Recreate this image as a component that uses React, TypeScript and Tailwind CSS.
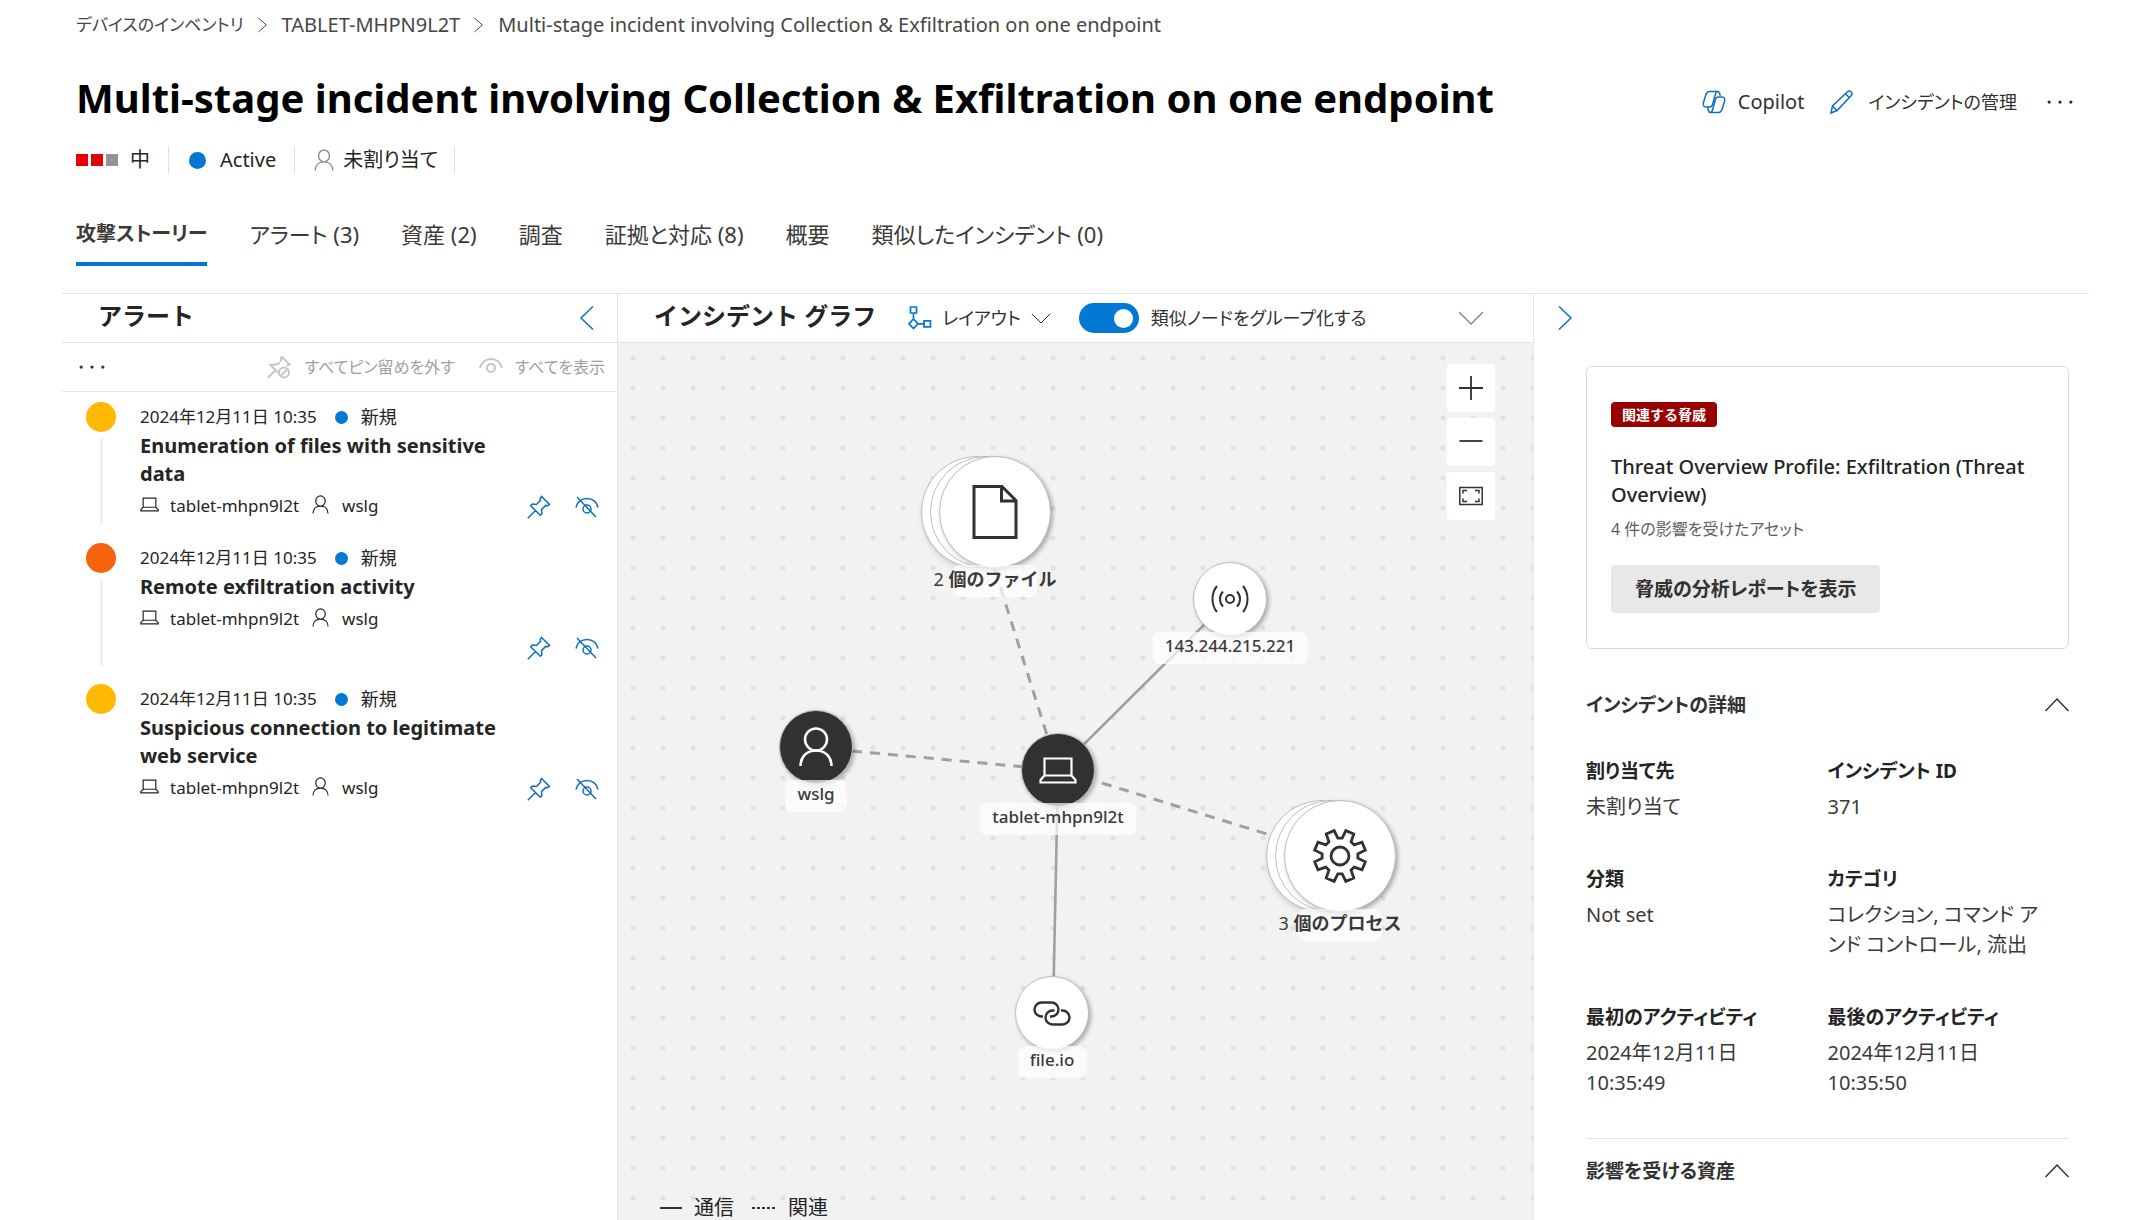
import React, { useState } from 'react';
import { clsx } from 'clsx';

const TABS = ['攻撃ストーリー', 'アラート (3)', '資産 (2)', '調査', '証拠と対応 (8)', '概要', '類似したインシデント (0)'];

const ALERTS = [
  { title: 'Enumeration of files with sensitive data', color: 'bg-[#ffb900]' },
  { title: 'Remote exfiltration activity', color: 'bg-[#f7630c]' },
  { title: 'Suspicious connection to legitimate web service', color: 'bg-[#ffb900]' },
];

const DETAILS = [
  { label: '割り当て先', value: '未割り当て' },
  { label: 'インシデント ID', value: '371' },
  { label: '分類', value: 'Not set' },
  { label: 'カテゴリ', value: 'コレクション, コマンド アンド コントロール, 流出' },
  { label: '最初のアクティビティ', value: '2024年12月11日 10:35:49' },
  { label: '最後のアクティビティ', value: '2024年12月11日 10:35:50' },
];

function Icon({ d, size = 24, width = 1.5, className, children }: any) {
  return (
    <svg viewBox="0 0 24 24" width={size} height={size} fill="none" stroke="currentColor" strokeWidth={width} className={clsx('shrink-0', className)} aria-hidden="true">
      {d && <path d={d} />}
      {children}
    </svg>
  );
}

const PIN = 'M14.5 1.5l8 8-1.8 1.2-2-.3-4.2 4.2.4 4.2-1.6 1.5L3.7 10.7l1.5-1.6 4.2.4 4.2-4.2-.4-2z M8.5 15.5L.8 23.2';
const PERSON = 'M12 1a6 6.5 0 1 0 0 13 6 6.5 0 1 0 0-13z M2.5 23.5c0-5.5 3.5-9.5 9.5-9.5s9.5 4 9.5 9.5';
const CRUMB = 'M5 1.5L17 12 5 22.5';

function Laptop({ size, width = 1.5, className }: any) {
  return (
    <Icon size={size} width={width} className={className}>
      <path d="M4 4h16v11.5H4z M4 15.5L1 18.5V20h22v-1.5l-3-3" />
    </Icon>
  );
}

function EyeOff() {
  return (
    <Icon className="text-[#106ebe]">
      <path d="M1 12.5C2 7 6.5 3.5 12 3.5S22 7 23 12.5 M2 2l19 20" />
      <circle cx="12" cy="14" r="4" />
    </Icon>
  );
}

function Dots() {
  return (
    <Icon size={26}>
      <g fill="currentColor" stroke="none">
        <circle cx="2" cy="12" r="1.5" />
        <circle cx="12" cy="12" r="1.5" />
        <circle cx="22" cy="12" r="1.5" />
      </g>
    </Icon>
  );
}

function AlertItem({ title, color, last }: any) {
  return (
    <li className="flex min-h-[141px] pt-[10px] pb-2 pl-6 pr-[18px]">
      <div className="flex w-[30px] shrink-0 flex-col items-center gap-[6px]">
        <span className={clsx('h-[30px] w-[30px] rounded-full', color)} />
        {!last && <span className="w-[3px] grow bg-[#f0f0f0]" />}
      </div>
      <div className="ml-6 w-[372px]">
        <div className="flex h-[30px] items-center text-[17px]">
          <span>2024年12月11日 10:35</span>
          <span className="ml-[18px] mr-[13px] h-[13px] w-[13px] rounded-full bg-[#0078d4]" />
          <span className="text-[18px]">新規</span>
        </div>
        <h3 className="text-[20px] font-bold leading-7">{title}</h3>
        <div className="flex h-9 items-center text-[17px]">
          <Laptop size={19} className="mb-1" />
          <span className="ml-[11px] mr-3">tablet-mhpn9l2t</span>
          <Icon d={PERSON} size={19} className="mb-1" />
          <span className="ml-3">wslg</span>
        </div>
      </div>
      <div className="ml-auto flex h-9 items-center gap-6 self-end">
        <button aria-label="ピン留め" className="text-[#106ebe]"><Icon d={PIN} /></button>
        <button aria-label="非表示"><EyeOff /></button>
      </div>
    </li>
  );
}

// circle and caption of one graph entity, anchored on the circle's centre
function Node({ x, y, label, dark, group, children }: any) {
  return (
    <div className="absolute" style={{ left: x, top: y }}>
      <div className={clsx('absolute -translate-x-1/2 -translate-y-1/2', group ? 'h-28 w-28' : 'h-[74px] w-[74px]')}>
        {group && (
          <>
            <span className="absolute -left-[18px] top-0 h-28 w-28 rounded-full border border-[#c0bebc] bg-white shadow-md" />
            <span className="absolute -left-[9px] top-0 h-28 w-28 rounded-full border border-[#c0bebc] bg-white" />
          </>
        )}
        <div className={clsx(
          'relative flex h-full w-full items-center justify-center rounded-full border border-[#c0bebc] shadow-[2px_2px_4px_rgba(0,0,0,0.3)]',
          dark ? 'bg-[#323130] text-white' : 'bg-white text-[#323130]'
        )}>
          {children}
        </div>
      </div>
      <div className={clsx(
        'absolute flex h-8 -translate-x-1/2 items-center justify-center whitespace-nowrap rounded-md bg-white/70 pb-1 font-medium text-[#3b3a39] [font-feature-settings:normal]',
        group ? 'top-[53px] w-[84px] text-[18px]' : 'top-[33px] px-3 text-[17px]'
      )}>
        {label}
      </div>
    </div>
  );
}

function Graph() {
  return (
    <div className="relative grow overflow-hidden bg-[#f2f2f2] bg-[radial-gradient(circle,#e1e1e1_2px,transparent_3px)] bg-[length:30px_30px]">
      <svg className="absolute left-0 top-0 h-full w-full" stroke="#a0a0a0" strokeWidth="3" fill="none" aria-hidden="true">
        <path d="M377 227L440 427 M234 408L440 427 M484 440L723 514" strokeDasharray="10 8" />
        <path d="M612 256L440 427L435 671" strokeWidth="2.6" />
      </svg>
      <Node x={377} y={169} group label={<><span className="font-normal">2&nbsp;</span><span className="font-bold">個のファイル</span></>}>
        <svg width="46" height="54" viewBox="0 0 46 54" fill="none" stroke="currentColor" strokeWidth="3">
          <path d="M2 1.5h28l14 14v37H2z M29.5 1.5v14.5H44" />
        </svg>
      </Node>
      <Node x={612} y={256} label="143.244.215.221">
        <svg width="38" height="28" viewBox="0 0 38 28" fill="none" stroke="currentColor" strokeWidth="2">
          <circle cx="19" cy="14" r="4" />
          <path d="M12 6.5c-4 4-4 11 0 15M26 6.5c4 4 4 11 0 15M6 1C0 8 0 20 6 27M32 1c6 7 6 19 0 26" />
        </svg>
      </Node>
      <Node x={198} y={404} dark label="wslg">
        <svg width="34" height="40" viewBox="0 0 34 40" fill="none" stroke="currentColor" strokeWidth="2.5">
          <circle cx="17" cy="12.5" r="11" />
          <path d="M1.5 39c0-9 6-15.5 15.5-15.5S32.5 30 32.5 39" />
        </svg>
      </Node>
      <Node x={440} y={427} dark label="tablet-mhpn9l2t">
        <svg width="38" height="27" viewBox="0 0 38 27" fill="none" stroke="currentColor" strokeWidth="2.2">
          <path d="M5.5 1.5h27v17h-27z M5.5 18.5L1.5 23v2.5h35V23l-4-4.5" />
        </svg>
      </Node>
      <Node x={722} y={513} group label={<><span className="font-normal">3&nbsp;</span><span className="font-bold">個のプロセス</span></>}>
        <Gear />
      </Node>
      <Node x={434} y={670} label="file.io">
        <svg width="38" height="25" viewBox="0 0 38 25" fill="none" stroke="currentColor" strokeWidth="2.4">
          <path d="M10 15.5H8.5a7 7 0 0 1 0-14h10a7 7 0 0 1 0 14h-1.5" />
          <path d="M28 9.5h1.5a7 7 0 0 1 0 14h-10a7 7 0 0 1 0-14h2" />
        </svg>
      </Node>

      <div className="absolute right-[38px] top-[21px] flex flex-col gap-[6px] text-[#323130]">
        <button aria-label="拡大" className="flex h-12 w-12 items-center justify-center rounded-sm bg-white"><Icon d="M12 0v24M0 12h24" width={1.8} /></button>
        <button aria-label="縮小" className="flex h-12 w-12 items-center justify-center rounded-sm bg-white"><Icon d="M.5 11h23" width={1.8} /></button>
        <button aria-label="全体を表示" className="flex h-12 w-12 items-center justify-center rounded-sm bg-white">
          <Icon d="M.8 3.5h22.4v17H.8z M4 9.5v-3h4 M16 6.5h4v3 M20 14.5v3h-4 M8 17.5H4v-3" />
        </button>
      </div>

      <div className="absolute bottom-0 left-[42px] flex h-6 items-center text-[20px]">
        <span className="mr-3 h-[2px] w-[22px] bg-[#323130]" />
        <span>通信</span>
        <svg width="24" height="2" className="ml-[18px] mr-3" aria-hidden="true"><path d="M0 1h24" stroke="#323130" strokeWidth="2" strokeDasharray="3 2" /></svg>
        <span>関連</span>
      </div>
    </div>
  );
}

// eight teeth, each drawn as inner edge then outer edge
const GEAR = Array.from({ length: 8 }, (_, i) => {
  const at = (deg: number, r: number) => {
    const a = ((i * 45 + deg) * Math.PI) / 180;
    return `${(r * Math.cos(a)).toFixed(2)} ${(r * Math.sin(a)).toFixed(2)}`;
  };
  return `${i ? 'L' : 'M'}${at(-7, 18)}L${at(7, 18)}L${at(13, 26)}L${at(32, 26)}`;
}).join('') + 'Z';

function Gear() {
  return (
    <svg width="56" height="56" viewBox="-28 -28 56 56" fill="none" stroke="currentColor" strokeWidth="2.8">
      <circle r="9" />
      <path d={GEAR} />
    </svg>
  );
}

function SectionTitle({ children }: any) {
  return (
    <button className="flex h-16 w-full items-center justify-between text-[19px] font-bold text-[#323130]">
      {children}
      <Icon d="M.5 18L12 6l11.5 12" />
    </button>
  );
}

export default function App() {
  const [tab, setTab] = useState(0);
  const [grouped, setGrouped] = useState(true);

  return (
    <div className="flex min-h-screen flex-col bg-white pl-[62px] pr-[52px] font-['Noto_Sans','Noto_Sans_CJK_JP',sans-serif] text-[#242424] [font-feature-settings:'palt']">
      <header className="pl-[14px] pr-4">
        <nav className="flex h-[50px] items-center gap-[11px] text-[20px] text-[#484644]">
          <a href="#devices" className="text-[17px]">デバイスのインベントリ</a>
          <Icon d={CRUMB} size={16} />
          <a href="#tablet">TABLET-MHPN9L2T</a>
          <Icon d={CRUMB} size={16} />
          <span>Multi-stage incident involving Collection &amp; Exfiltration on one endpoint</span>
        </nav>

        <div className="flex items-center justify-between pt-[22px]">
          <h1 className="text-[40px] font-bold leading-[52px] text-black">Multi-stage incident involving Collection &amp; Exfiltration on one endpoint</h1>
          <div className="flex items-center pt-2 text-[#323130]">
            <button className="flex items-center gap-3 text-[20px]">
              <Icon className="text-[#106ebe]">
                <path d="M7.5 1.5h8c1.3 0 1.9.8 2.2 2l.6 2.3 M7.5 1.5C5.5 1.5 4.2 3.500 3.500 6L1.500 12.500c-.7 2.600 0 4.500 2.500 4.500h3.800c1.500 0 2.300-.9 2.700-2.300l2.900-10.400c.5-1.800 1.300-2.800 2.600-2.800" />
                <path d="M16.500 22.500h-8c-1.300 0-1.900-.8-2.200-2l-.6-3.300 M16.500 22.500c2 0 3.300-2 4-4.500l2-6.500c.7-2.600 0-4.500-2.500-4.500h-3.800c-1.500 0-2.300.9-2.700 2.300l-2.900 10.400c-.5 1.800-1.300 2.800-2.600 2.800" />
              </Icon>
              Copilot
            </button>
            <button className="ml-[26px] flex items-center gap-[14px] text-[18px]">
              <Icon className="text-[#106ebe]" d="M1 23l1.5-7L17.5 1.8c1.2-1.1 2.5-1 3.6 0 1.3 1.2 1.3 2.6.2 3.700L7 20.500z M15.500 3.800l4 4 M2.500 16l4.500 4.500" />
              インシデントの管理
            </button>
            <button aria-label="その他" className="ml-[30px]"><Dots /></button>
          </div>
        </div>

        <div className="flex h-[72px] items-center text-[20px]">
          <span className="flex gap-[3px]">
            <span className="h-3 w-3 bg-[#e60000]" />
            <span className="h-3 w-3 bg-[#e60000]" />
            <span className="h-3 w-3 bg-[#949494]" />
          </span>
          <span className="ml-3 border-r border-[#e1dfdd] pr-[18px] leading-7">中</span>
          <span className="ml-5 h-[17px] w-[17px] rounded-full bg-[#0078d4]" />
          <span className="ml-[14px] border-r border-[#e1dfdd] pr-[18px] leading-7">Active</span>
          <Icon d={PERSON} size={22} className="ml-[18px] text-[#8a8886]" />
          <span className="ml-2 border-r border-[#e1dfdd] pr-4 leading-7">未割り当て</span>
        </div>

        <div role="tablist" className="mt-[10px] flex h-[60px] gap-[42px] text-[22px] text-[#3b3a39]">
          {TABS.map((t, i) => (
            <button
              key={t}
              role="tab"
              aria-selected={tab === i}
              onClick={() => setTab(i)}
              className={clsx('border-b-4', tab === i ? 'border-[#0078d4] text-[20px] font-bold' : 'border-transparent')}
            >
              {t}
            </button>
          ))}
        </div>
      </header>

      <main className="mt-[27px] flex grow border-t border-[#e5e5e5]">
        <section className="flex w-[556px] shrink-0 flex-col border-r border-[#e5e5e5]">
          <div className="flex h-[49px] items-center justify-between border-b border-[#e5e5e5] pl-9 pr-[18px]">
            <h2 className="pb-1 text-[24px] font-bold [font-feature-settings:normal]">アラート</h2>
            <button aria-label="閉じる" className="text-[#106ebe]"><Icon d="M18 .5L6 12l12 11.5" /></button>
          </div>
          <div className="flex h-[49px] items-center border-b border-[#e5e5e5] pl-[17px] pr-3 text-[16px] text-[#a19f9d]">
            <button aria-label="その他" className="text-[#323130]"><Dots /></button>
            <button className="ml-auto flex items-center gap-[14px]">
              <Icon className="text-[#c8c6c4]" width={2}>
                <path d="M14.5 1.5l8 8-3 1M13 8L8.5 9.5l-5 .5 8 8 M13.5 7l1-5.5 M8 15.5L.8 23" />
                <circle cx="17" cy="17.5" r="5" />
                <path d="M13.5 21l7-7" />
              </Icon>
              すべてピン留めを外す
            </button>
            <button className="ml-6 flex items-center gap-3">
              <Icon className="text-[#c8c6c4]" width={2}>
                <path d="M1 13C2 7.5 6.5 4 12 4s10 3.5 11 9" />
                <circle cx="12" cy="13" r="4" />
              </Icon>
              すべてを表示
            </button>
          </div>
          <ul>
            {ALERTS.map((a, i) => <AlertItem key={a.title} {...a} last={i === ALERTS.length - 1} />)}
          </ul>
        </section>

        <section className="flex min-w-0 grow flex-col border-r border-[#e5e5e5]">
          <div className="flex h-[49px] shrink-0 items-center border-b border-[#e5e5e5] pl-9 pr-[50px] text-[18px] text-[#323130]">
            <h2 className="pb-1 text-[24px] font-bold text-[#242424] [font-feature-settings:normal]">インシデント グラフ</h2>
            <button className="ml-8 flex items-center gap-[10px]">
              <Icon className="text-[#0078d4]" width={1.7} d="M2.5 1h6v6h-6z M5.5 7v6 M5.5 13l4.5 4.8-4.5 4.8L1 17.8z M10 17.8h6 M16 14.8h6.500v6H16z" />
              レイアウト
              <Icon size={20} width={1.2} d="M1 7l11 11L23 7" />
            </button>
            <label className="ml-7 flex items-center gap-3">
              <input type="checkbox" role="switch" checked={grouped} onChange={e => setGrouped(e.target.checked)} className="peer sr-only" />
              <span className="flex h-[30px] w-[60px] items-center justify-start rounded-full bg-[#8a8886] px-[6px] peer-checked:justify-end peer-checked:bg-[#0078d4]">
                <span className="h-[19px] w-[19px] rounded-full bg-white" />
              </span>
              類似ノードをグループ化する
            </label>
            <button aria-label="展開" className="ml-auto text-[#8a8886]"><Icon d="M0 6l12 12L24 6" /></button>
          </div>
          <Graph />
        </section>

        <aside className="w-[555px] shrink-0 pl-6">
          <div className="flex h-12 items-center">
            <button aria-label="閉じる" className="text-[#106ebe]"><Icon d="M1 .5L13 12 1 23.5" /></button>
          </div>
          <div className="ml-7 mr-5 mt-6">
            <div className="mb-6 rounded-md border border-[#dcdcdc] px-6 py-[35px]">
              <span className="block w-fit rounded-sm bg-[#990000] px-[11px] text-[14px] font-bold leading-[25px] text-white [font-feature-settings:normal]">関連する脅威</span>
              <h3 className="mt-[26px] text-[20px] font-medium leading-7">Threat Overview Profile: Exfiltration (Threat Overview)</h3>
              <p className="mt-2 text-[16px] leading-6 text-[#605e5c]">4 件の影響を受けたアセット</p>
              <button className="mt-6 h-12 rounded bg-[#e8e8e8] px-6 text-[19px] font-bold text-[#323130]">脅威の分析レポートを表示</button>
            </div>

            <SectionTitle>インシデントの詳細</SectionTitle>
            <dl className="mt-4 grid grid-cols-2 gap-y-[39px] border-b border-[#e5e5e5] pb-10 text-[20px]">
              {DETAILS.map(d => (
                <div key={d.label}>
                  <dt className="text-[19px] font-bold leading-9">{d.label}</dt>
                  <dd className="mt-[3px] max-w-[216px] leading-[30px] text-[#3b3a39]">{d.value}</dd>
                </div>
              ))}
            </dl>
            <SectionTitle>影響を受ける資産</SectionTitle>
          </div>
        </aside>
      </main>
    </div>
  );
}
